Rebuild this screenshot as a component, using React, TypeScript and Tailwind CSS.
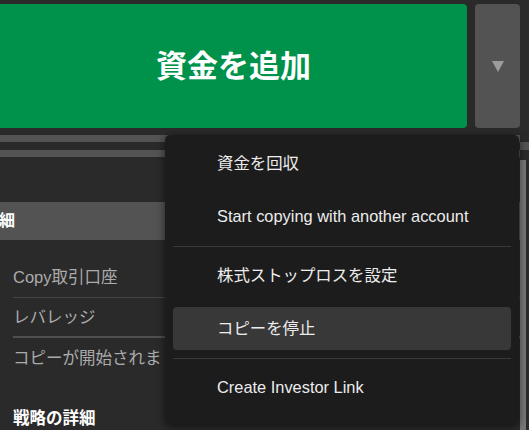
import React from "react";

const FONT = "font-['Liberation_Sans','Noto_Sans_CJK_JP',sans-serif]";

type MenuItem = { label: string; active?: boolean; dividerBefore?: boolean };

const menuItems: MenuItem[] = [
  { label: "資金を回収" },
  { label: "Start copying with another account" },
  { label: "株式ストップロスを設定", dividerBefore: true },
  { label: "コピーを停止", active: true },
  { label: "Create Investor Link", dividerBefore: true },
];

const rows = ["Copy取引口座", "レバレッジ", "コピーが開始されました"];

function ActionsMenu() {
  return (
    <div className="absolute left-[165px] top-[135px] w-[354px] h-[289px] rounded-[5px] bg-[#1c1c1c] px-[8px] pt-[7px] shadow-[0_2px_8px_rgba(0,0,0,0.6)]">
      {menuItems.map((item, i) => (
        <React.Fragment key={item.label}>
          {item.dividerBefore && <div className="mt-[8px] mb-[7px] h-px bg-[#3a3a3a]" />}
          <div
            className={
              "flex h-[43px] items-center rounded-[4px] pl-[44px] text-[16.4px] leading-none text-[#ececec] " +
              (item.active ? "bg-[#383838] " : "") +
              (i > 0 && !item.dividerBefore ? "mt-[10px]" : "")
            }
          >
            {item.label}
          </div>
        </React.Fragment>
      ))}
    </div>
  );
}

export default function App() {
  return (
    <div className={`relative h-[430px] w-[529px] overflow-hidden bg-[#2a2a2a] ${FONT}`}>
      {/* action buttons */}
      <div className="flex gap-[8px] pt-[4px]">
        <div className="flex h-[124px] w-[467px] items-center justify-center rounded-r-[4px] bg-[#00924a]">
          <span className="text-[31px] font-bold leading-none text-white">資金を追加</span>
        </div>
        <div className="flex h-[124px] w-[45px] items-center justify-center rounded-[4px] bg-[#535353]">
          <svg width="12" height="11" viewBox="0 0 12 11">
            <path d="M0 0h12L6 11z" fill="#9c9c9c" />
          </svg>
        </div>
      </div>

      {/* details panel */}
      <div className="mt-[7px] flex">
        <div className="w-[520px]">
          <div className="h-[7px] bg-[#535353]" />
          <div className="mt-[8px] h-[7px] bg-[#535353]" />
          <div className="mt-[45px] flex h-[38px] items-center bg-[#535353]">
            <span className="-ml-[17px] text-[16px] font-bold leading-none text-white">詳細</span>
          </div>
          <div className="mt-[18px] pl-[13px]">
            {rows.map((r, i) => (
              <div
                key={r}
                className={
                  "flex h-[40px] items-center whitespace-nowrap text-[16.5px] leading-none text-[#ababab] " +
                  (i < rows.length - 1 ? (i === 0 ? "border-b border-[#454545]" : "border-b-2 border-[#4f4f4f]") : "")
                }
              >
                {r}
              </div>
            ))}
          </div>
          <div className="mt-[32px] pl-[13px] text-[16.5px] font-bold leading-none text-white">戦略の詳細</div>
        </div>
        {/* scrollbar */}
        <div className="w-[9px]">
          <div className="mt-[7px] h-[8px] bg-[#535353]" />
          <div className="mt-[10px] h-[300px] w-[6px] bg-[#777777]" />
        </div>
      </div>

      <ActionsMenu />
    </div>
  );
}
